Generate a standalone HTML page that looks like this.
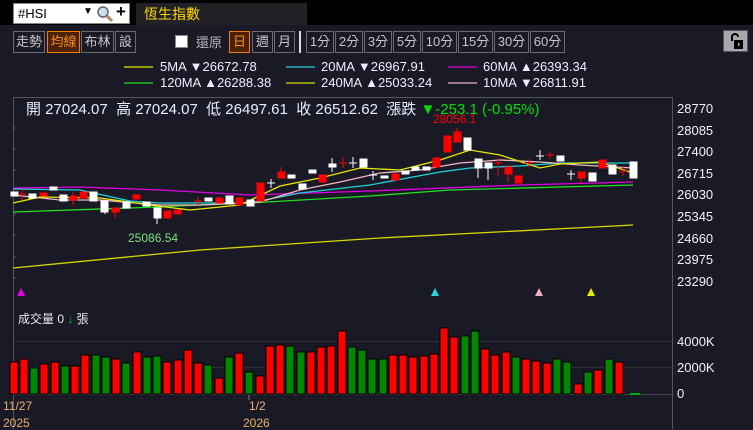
<!DOCTYPE html>
<html><head><meta charset="utf-8"><style>
*{margin:0;padding:0;box-sizing:border-box}
body{width:753px;height:429px;background:#1a1926;position:relative;overflow:hidden;font-family:"Liberation Sans","Noto Sans CJK TC",sans-serif;color:#e8e8f8}
.a{position:absolute;white-space:nowrap}
.btn{position:absolute;top:31px;height:22px;border:1px solid #6a6a72;color:#c8c8c8;font-size:13px;line-height:20px;text-align:center}
.on{border-color:#ff7a00;background:#4a2208;color:#ff8a10}
.lg{font-size:13px;color:#eef}
</style></head><body>
<div class="a" style="left:0;top:0;width:753px;height:25px;background:#000"></div>
<div class="a" style="left:13px;top:3px;width:117px;height:21px;background:#fff;border:1px solid #888;color:#000;font-size:13px;line-height:19px;padding-left:4px">#HSI</div>
<div class="a" style="left:83px;top:6px;color:#000;font-size:10px">▼</div>
<svg class="a" style="left:96px;top:5px" width="18" height="18"><circle cx="7" cy="7" r="5" fill="#cde" stroke="#667" stroke-width="1.5"/><line x1="11" y1="11" x2="16" y2="16" stroke="#a86" stroke-width="3"/></svg>
<div class="a" style="left:116px;top:2px;color:#000;font-size:17px;font-weight:bold">+</div>
<div class="a" style="left:136px;top:3px;width:171px;height:22px;background:#222226;color:#ffd800;font-size:14px;line-height:22px;padding-left:8px">恆生指數</div>

<div class="btn" style="left:13px;width:32px">走勢</div>
<div class="btn on" style="left:47px;width:33px">均線</div>
<div class="btn" style="left:81px;width:33px">布林</div>
<div class="btn" style="left:115px;width:21px">設</div>
<div class="a" style="left:175px;top:35px;width:13px;height:13px;background:#fff;border:1px solid #888"></div>
<div class="a" style="left:196px;top:32px;color:#b8b8b8;font-size:13px">還原</div>
<div class="btn on" style="left:229px;width:21px">日</div>
<div class="btn" style="left:252px;width:21px">週</div>
<div class="btn" style="left:274px;width:21px">月</div>
<div class="a" style="left:299px;top:31px;width:2px;height:22px;background:#ddd"></div>
<div class="btn" style="left:306px;width:28px">1分</div>
<div class="btn" style="left:335px;width:28px">2分</div>
<div class="btn" style="left:364px;width:28px">3分</div>
<div class="btn" style="left:393px;width:28px">5分</div>
<div class="btn" style="left:422px;width:35px">10分</div>
<div class="btn" style="left:458px;width:35px">15分</div>
<div class="btn" style="left:494px;width:35px">30分</div>
<div class="btn" style="left:530px;width:35px">60分</div>
<div class="a" style="left:723px;top:30px;width:25px;height:22px;background:#a8a8ac;border:1px solid #555"></div>
<svg class="a" style="left:723px;top:30px" width="25" height="22"><path d="M9 11V7a3 3 0 0 1 6 0" fill="none" stroke="#000" stroke-width="2"/><rect x="11" y="10" width="9" height="9" fill="#000"/><rect x="15" y="13" width="1.5" height="3" fill="#aaa"/></svg>

<svg class="a" style="left:0;top:60px" width="753" height="30">
<g stroke-width="1.2"><line x1="124" y1="7" x2="153" y2="7" stroke="#e8e800"/><line x1="286" y1="7" x2="315" y2="7" stroke="#20d0d8"/><line x1="448" y1="7" x2="477" y2="7" stroke="#e000e0"/>
<line x1="124" y1="23" x2="153" y2="23" stroke="#20e020"/><line x1="286" y1="23" x2="315" y2="23" stroke="#d8d800"/><line x1="448" y1="23" x2="477" y2="23" stroke="#f0b8c0"/></g></svg>
<div class="a lg" style="left:160px;top:59px">5MA ▼26672.78</div>
<div class="a lg" style="left:321px;top:59px">20MA ▼26967.91</div>
<div class="a lg" style="left:483px;top:59px">60MA ▲26393.34</div>
<div class="a lg" style="left:160px;top:75px">120MA ▲26288.38</div>
<div class="a lg" style="left:321px;top:75px">240MA ▲25033.24</div>
<div class="a lg" style="left:483px;top:75px">10MA ▼26811.91</div>

<svg class="a" style="left:0;top:0" width="753" height="429">
<g fill="none" stroke="#55555c"><path d="M13.5 429V97.5H672.5V429"/></g>
<g stroke="#2e2e36"><line x1="13" y1="341.5" x2="672" y2="341.5"/><line x1="13" y1="367.5" x2="672" y2="367.5"/><line x1="13" y1="394.5" x2="672" y2="394.5" stroke="#44444a"/></g>
<g stroke="#555" ><line x1="13" y1="128" x2="16" y2="128"/><line x1="13" y1="149" x2="16" y2="149"/><line x1="13" y1="170" x2="16" y2="170"/><line x1="13" y1="192" x2="16" y2="192"/><line x1="13" y1="214" x2="16" y2="214"/><line x1="13" y1="235" x2="16" y2="235"/><line x1="13" y1="257" x2="16" y2="257"/><line x1="13" y1="278" x2="16" y2="278"/></g>
<g fill="none" stroke-width="1.3">
<polyline stroke="#e000e0" points="13,188 80,187 160,190 250,195 370,191 520,185 633,182"/>
<polyline stroke="#20e020" points="13,212 130,208 250,203 370,196 450,190 633,185"/>
<polyline stroke="#20d0d8" points="13,189 80,190 130,201 160,203 250,203 300,193 370,185 440,172 470,168 520,166 560,163 633,163"/>
<polyline stroke="#f0b8c0" points="13,195 60,200 100,200 160,205 200,205 260,202 300,190 340,182 380,173 420,170 460,163 500,160 540,162 580,165 633,168"/>
<polyline stroke="#e8e800" points="13,203 40,197 100,198 150,205 190,210 240,205 280,186 320,178 360,168 400,170 440,160 470,150 500,155 540,168 560,164 600,162 633,173"/>
<polyline stroke="#d8d800" points="13,268 200,250 380,238 633,225"/>
</g>
<g stroke-width="1">
<g fill="#fff" stroke="#fff">
<rect x="11" y="192" width="7" height="4"/><rect x="29" y="194" width="7" height="4"/><rect x="50" y="187" width="7" height="3"/><rect x="60" y="195" width="7" height="6"/><rect x="90" y="192" width="7" height="9"/><rect x="101" y="201" width="7" height="11"/><line x1="105" y1="212" x2="105" y2="214"/><rect x="123" y="202" width="7" height="6"/><rect x="143" y="202" width="7" height="4"/><rect x="154" y="208" width="7" height="10"/><line x1="157" y1="218" x2="157" y2="224"/><rect x="205" y="198" width="7" height="3"/><rect x="226" y="196" width="7" height="8"/><rect x="247" y="200" width="7" height="6"/><line x1="267" y1="183" x2="275" y2="183"/><line x1="271" y1="179" x2="271" y2="188"/><rect x="288" y="175" width="7" height="3"/><rect x="299" y="184" width="7" height="5"/><rect x="309" y="170" width="7" height="3"/><rect x="329" y="164" width="7" height="3"/><line x1="332" y1="158" x2="332" y2="172"/><line x1="349" y1="163" x2="357" y2="163"/><line x1="353" y1="157" x2="353" y2="168"/><rect x="360" y="159" width="7" height="8"/><line x1="369" y1="175" x2="377" y2="175"/><line x1="373" y1="171" x2="373" y2="180"/><rect x="381" y="176" width="7" height="2"/><rect x="402" y="171" width="7" height="3"/><rect x="412" y="167" width="7" height="3"/><rect x="423" y="167" width="7" height="3"/><rect x="464" y="138" width="7" height="12"/><rect x="475" y="159" width="7" height="9"/><line x1="478" y1="168" x2="478" y2="178"/><rect x="485" y="163" width="7" height="5"/><line x1="488" y1="168" x2="488" y2="180"/><line x1="536" y1="156" x2="544" y2="156"/><line x1="540" y1="150" x2="540" y2="160"/><rect x="557" y="156" width="7" height="5"/><line x1="567" y1="174" x2="575" y2="174"/><line x1="571" y1="170" x2="571" y2="180"/><rect x="589" y="173" width="7" height="8"/><rect x="609" y="165" width="7" height="9"/><rect x="630" y="162" width="7" height="16"/>
</g>
<g fill="#f00" stroke="#f00">
<line x1="22" y1="189" x2="22" y2="200"/><line x1="18" y1="194" x2="26" y2="194"/><rect x="40" y="193" width="7" height="3"/><rect x="70" y="196" width="7" height="4"/><line x1="73" y1="192" x2="73" y2="205"/><rect x="80" y="192" width="7" height="6"/><rect x="112" y="208" width="7" height="4"/><line x1="115" y1="212" x2="115" y2="218"/><rect x="133" y="195" width="7" height="4"/><rect x="164" y="211" width="7" height="7"/><rect x="174" y="210" width="7" height="4"/><line x1="194" y1="201" x2="202" y2="201"/><line x1="198" y1="197" x2="198" y2="205"/><rect x="216" y="198" width="7" height="5"/><rect x="236" y="198" width="7" height="7"/><rect x="257" y="183" width="7" height="18"/><rect x="278" y="172" width="7" height="6"/><line x1="281" y1="167" x2="281" y2="172"/><rect x="319" y="175" width="7" height="7"/><line x1="339" y1="163" x2="347" y2="163"/><line x1="343" y1="157" x2="343" y2="168"/><rect x="392" y="174" width="7" height="6"/><rect x="433" y="158" width="7" height="9"/><rect x="444" y="136" width="7" height="16"/><rect x="454" y="132" width="7" height="10"/><line x1="457" y1="128" x2="457" y2="132"/><line x1="498" y1="158" x2="498" y2="175"/><line x1="494" y1="163" x2="502" y2="163"/><rect x="505" y="167" width="7" height="7"/><line x1="508" y1="174" x2="508" y2="182"/><rect x="515" y="176" width="7" height="7"/><line x1="525" y1="163" x2="533" y2="163"/><line x1="529" y1="159" x2="529" y2="167"/><line x1="546" y1="155" x2="554" y2="155"/><line x1="550" y1="152" x2="550" y2="159"/><rect x="578" y="172" width="7" height="6"/><line x1="581" y1="178" x2="581" y2="183"/><rect x="599" y="160" width="7" height="8"/><line x1="619" y1="171" x2="627" y2="171"/><line x1="623" y1="167" x2="623" y2="176"/>
</g></g>
<path d="M21 288l-4 8h8z" fill="#e000e0"/><path d="M435 288l-4 8h8z" fill="#20d8e0"/><path d="M539 288l-4 8h8z" fill="#f0b0c0"/><path d="M591 288l-4 8h8z" fill="#e8e800"/>
<line x1="630" y1="394" x2="640" y2="394" stroke="#0a0" stroke-width="2"/>
<line x1="249" y1="395" x2="249" y2="400" stroke="#888"/>
</svg>
<div class="a" style="left:26px;top:98px;font-size:15px;color:#e8eeff">開 27024.07&nbsp; 高 27024.07&nbsp; 低 26497.61&nbsp; 收 26512.62&nbsp; 漲跌 <span style="color:#00e000">▼-253.1 (-0.95%)</span></div>
<div class="a" style="left:433px;top:112px;font-size:12px;color:#f00">28056.1</div>
<div class="a" style="left:128px;top:231px;font-size:12px;color:#80e080">25086.54</div>
<div class="a" style="left:677px;top:98px;font-size:13px;line-height:21.6px;color:#f0f0ff">28770<br>28085<br>27400<br>26715<br>26030<br>25345<br>24660<br>23975<br>23290</div>
<div class="a" style="left:677px;top:334px;font-size:13px;color:#f0f0ff">4000K</div>
<div class="a" style="left:677px;top:360px;font-size:13px;color:#f0f0ff">2000K</div>
<div class="a" style="left:677px;top:386px;font-size:13px;color:#f0f0ff">0</div>
<div class="a" style="left:18px;top:310px;font-size:12px;color:#e8e8f0">成交量 0 <span style="color:#0c0">↓</span> 張</div>
<div class="a" style="left:3px;top:399px;font-size:12px;color:#e8b070">11/27</div>
<div class="a" style="left:3px;top:416px;font-size:12px;color:#e8b070">2025</div>
<div class="a" style="left:249px;top:399px;font-size:12px;color:#e8b070">1/2</div>
<div class="a" style="left:243px;top:416px;font-size:12px;color:#e8b070">2026</div>
<svg class="a" style="left:0;top:0" width="753" height="429">
<g stroke="#000" stroke-width="1">
<rect x="10" y="362" width="8" height="32" fill="#f00"/><rect x="20" y="359" width="8" height="35" fill="#f00"/><rect x="30" y="368" width="8" height="26" fill="#080"/><rect x="40" y="364" width="8" height="30" fill="#f00"/><rect x="51" y="362" width="8" height="32" fill="#f00"/><rect x="61" y="366" width="8" height="28" fill="#080"/><rect x="71" y="366" width="8" height="28" fill="#f00"/><rect x="81" y="355" width="8" height="39" fill="#f00"/><rect x="92" y="355" width="8" height="39" fill="#080"/><rect x="102" y="357" width="8" height="37" fill="#080"/><rect x="112" y="359" width="8" height="35" fill="#f00"/><rect x="122" y="363" width="8" height="31" fill="#080"/><rect x="133" y="352" width="8" height="42" fill="#f00"/><rect x="143" y="357" width="8" height="37" fill="#080"/><rect x="153" y="356" width="8" height="38" fill="#080"/><rect x="163" y="362" width="8" height="32" fill="#f00"/><rect x="174" y="360" width="8" height="34" fill="#f00"/><rect x="184" y="350" width="8" height="44" fill="#f00"/><rect x="194" y="363" width="8" height="31" fill="#f00"/><rect x="204" y="365" width="8" height="29" fill="#080"/><rect x="215" y="378" width="8" height="16" fill="#f00"/><rect x="225" y="357" width="8" height="37" fill="#080"/><rect x="235" y="353" width="8" height="41" fill="#f00"/><rect x="245" y="372" width="8" height="22" fill="#080"/><rect x="256" y="376" width="8" height="18" fill="#f00"/><rect x="266" y="346" width="8" height="48" fill="#f00"/><rect x="276" y="345" width="8" height="49" fill="#f00"/><rect x="286" y="346" width="8" height="48" fill="#080"/><rect x="297" y="352" width="8" height="42" fill="#080"/><rect x="307" y="352" width="8" height="42" fill="#f00"/><rect x="317" y="347" width="8" height="47" fill="#f00"/><rect x="327" y="346" width="8" height="48" fill="#f00"/><rect x="338" y="331" width="8" height="63" fill="#f00"/><rect x="348" y="347" width="8" height="47" fill="#080"/><rect x="358" y="350" width="8" height="44" fill="#080"/><rect x="368" y="359" width="8" height="35" fill="#080"/><rect x="379" y="359" width="8" height="35" fill="#080"/><rect x="389" y="355" width="8" height="39" fill="#f00"/><rect x="399" y="355" width="8" height="39" fill="#f00"/><rect x="409" y="357" width="8" height="37" fill="#f00"/><rect x="420" y="356" width="8" height="38" fill="#f00"/><rect x="430" y="354" width="8" height="40" fill="#f00"/><rect x="440" y="328" width="8" height="66" fill="#f00"/><rect x="450" y="337" width="8" height="57" fill="#f00"/><rect x="461" y="336" width="8" height="58" fill="#080"/><rect x="471" y="331" width="8" height="63" fill="#080"/><rect x="481" y="349" width="8" height="45" fill="#f00"/><rect x="491" y="355" width="8" height="39" fill="#f00"/><rect x="502" y="352" width="8" height="42" fill="#f00"/><rect x="512" y="357" width="8" height="37" fill="#080"/><rect x="522" y="359" width="8" height="35" fill="#f00"/><rect x="532" y="361" width="8" height="33" fill="#f00"/><rect x="543" y="363" width="8" height="31" fill="#f00"/><rect x="553" y="359" width="8" height="35" fill="#080"/><rect x="563" y="362" width="8" height="32" fill="#080"/><rect x="574" y="384" width="8" height="10" fill="#f00"/><rect x="584" y="372" width="8" height="22" fill="#080"/><rect x="594" y="370" width="8" height="24" fill="#f00"/><rect x="605" y="359" width="8" height="35" fill="#080"/><rect x="615" y="362" width="8" height="32" fill="#f00"/>
</g></svg>
</body></html>
